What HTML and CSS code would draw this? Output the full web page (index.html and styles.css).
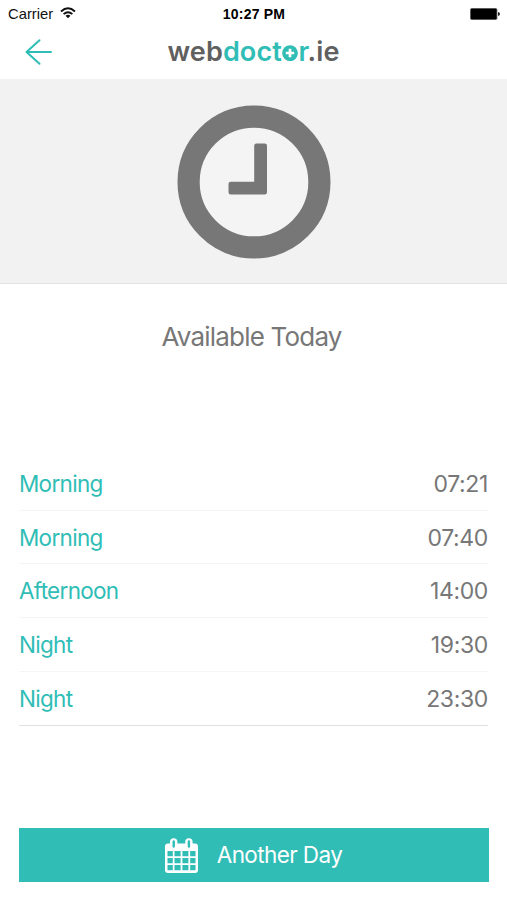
FILE: index.html
```html
<!DOCTYPE html>
<html lang="en">
<head>
<meta charset="utf-8">
<title>webdoctor.ie</title>
<link rel="stylesheet" href="styles.css">
</head>
<body>
<header class="top">
  <div class="status">
    <div class="carrier"><span>Carrier</span>
      <svg class="wifi" width="16" height="12" viewBox="0 0 16 12" fill="none" stroke="#111" stroke-width="1.9"><path d="M1 4.5Q8-1.8 15 4.5M3.6 7.1Q8 3.2 12.4 7.1"/><path d="M8 11.2 5.5 8.8Q8 6.8 10.5 8.8Z" fill="#111" stroke="none"/></svg>
    </div>
    <div class="clock">10:27 PM</div>
    <svg class="battery" width="30" height="12" viewBox="0 0 30 12"><rect width="27.4" height="12" rx="1.8" fill="#777"/><rect x=".8" y=".8" width="25.8" height="10.4" rx="1" fill="#000"/><path d="M28 4q2 .3 2 2t-2 2z" fill="#222"/></svg>
  </div>
  <nav class="nav">
    <svg class="back" width="28" height="28" viewBox="0 0 28 28" fill="none" stroke="#2fbdb6" stroke-width="2" stroke-linecap="round" stroke-linejoin="round"><path d="M14.5 2.2 1.5 14l13 11.8M1.5 14H26"/></svg>
    <div class="logo"><span>web</span><span class="teal">doct<span class="plus-o">o<svg viewBox="0 0 16 16"><circle cx="8" cy="8" r="7.8" fill="#2fbdb6"/><path d="M8 3.8v8.4M3.8 8h8.4" stroke="#fff" stroke-width="2.7"/></svg></span>r</span><span>.ie</span></div>
  </nav>
</header>
<section class="hero">
  <svg width="154" height="154" viewBox="0 0 154 154"><circle cx="77" cy="77" r="65.4" fill="#f4f4f4" stroke="#777" stroke-width="22.2"/><path d="M79.4 38.5h8.4q2.2 0 2.2 2.2v46.6q0 2.2-2.2 2.2H53.7q-2.2 0-2.2-2.2v-8.4q0-2.2 2.2-2.2h23.5v-36q0-2.2 2.2-2.2z" fill="#777"/></svg>
</section>
<main>
  <h1>Available Today</h1>
  <ul class="slots">
    <li><span class="name">Morning</span><span class="time">07:21</span></li>
    <li><span class="name">Morning</span><span class="time">07:40</span></li>
    <li><span class="name">Afternoon</span><span class="time">14:00</span></li>
    <li><span class="name">Night</span><span class="time">19:30</span></li>
    <li><span class="name">Night</span><span class="time">23:30</span></li>
  </ul>
  <button class="another">
    <svg width="33" height="35" viewBox="0 0 33 35"><path fill="#fff" fill-rule="evenodd" d="M3 5.5h2V4a3.7 3.7 0 0 1 7.4 0v1.5h7.8V4a3.7 3.7 0 0 1 7.4 0v1.5H30a3 3 0 0 1 3 3V32a3 3 0 0 1-3 3H3a3 3 0 0 1-3-3V8.5a3 3 0 0 1 3-3zM7.5 3.5v5a1.2 1.2 0 0 0 2.4 0v-5a1.2 1.2 0 0 0-2.4 0zM22.7 3.5v5a1.2 1.2 0 0 0 2.4 0v-5a1.2 1.2 0 0 0-2.4 0zM2.5 13v5.3h5.3V13zM9.5 13v5.3h6.1V13zM17.4 13v5.3h6V13zM25.2 13v5.3h5.3V13zM2.5 20v5.3h5.3V20zM9.5 20v5.3h6.1V20zM17.4 20v5.3h6V20zM25.2 20v5.3h5.3V20zM2.5 27v5.3h5.3V27zM9.5 27v5.3h6.1V27zM17.4 27v5.3h6V27zM25.2 27v5.3h5.3V27z"/></svg>
    <span>Another Day</span>
  </button>
</main>
</body>
</html>
```
FILE: styles.css
```css
* { box-sizing: border-box; }
body { margin: 0; width: 507px; height: 900px; background: #fff; color: #777; font-family: Inter, "Liberation Sans", sans-serif; overflow: hidden; }
svg { display: block; flex: none; }
.top { height: 79px; }
.status { height: 27px; padding: 0 7px 0 8px; display: grid; grid-template-columns: 1fr auto 1fr; align-items: center; color: #111; font-family: "Liberation Sans", sans-serif; font-size: 14.8px; }
.carrier { display: flex; align-items: center; gap: 7px; }
.wifi { margin-top: -2px; }
.clock { font-weight: 700; font-size: 14px; letter-spacing: .2px; color: #000; }
.battery { justify-self: end; }
.nav { height: 50px; padding: 0 25px; display: grid; grid-template-columns: 28px 1fr 28px; align-items: center; }
.logo { justify-self: center; font-size: 27px; line-height: 32px; font-weight: 600; letter-spacing: .1px; color: #606060; white-space: nowrap; }
.teal { color: #2fbdb6; }
.plus-o { position: relative; display: inline-block; }
.plus-o svg { position: absolute; left: 0; top: 9px; width: 16px; height: 16px; }
.hero { height: 205px; background: #f2f2f2; border-bottom: 1px solid #e2e2e2; padding-top: 26px; display: flex; justify-content: center; }
main { padding: 0 18px 0 19px; display: flex; flex-direction: column; }
h1 { margin: 37px 5px 0 0; font-size: 26px; line-height: 32px; font-weight: 400; text-align: center; letter-spacing: -.8px; }
.slots { list-style: none; margin: 104px 0 0; padding: 0 1px 0 0; }
.slots li { height: 53.7px; display: flex; justify-content: space-between; align-items: center; border-bottom: 1px solid #f5f5f5; font-size: 23px; line-height: 28px; }
.slots li:last-child { height: 54.7px; border-bottom-color: #e0e0e0; }
.name { padding-top: 1px; color: #2fbdb6; font-size: 22.5px; letter-spacing: -.7px; }
.time { padding-top: 1px; letter-spacing: -.35px; }
.another { margin-top: 102px; height: 54px; border: 0; padding: 0 1px 0 0; background: #2fbdb6; color: #fff; font: 400 22.5px Inter, sans-serif; letter-spacing: -.6px; display: flex; align-items: center; justify-content: center; gap: 19px; }
.another span { padding-bottom: 2px; }
```
